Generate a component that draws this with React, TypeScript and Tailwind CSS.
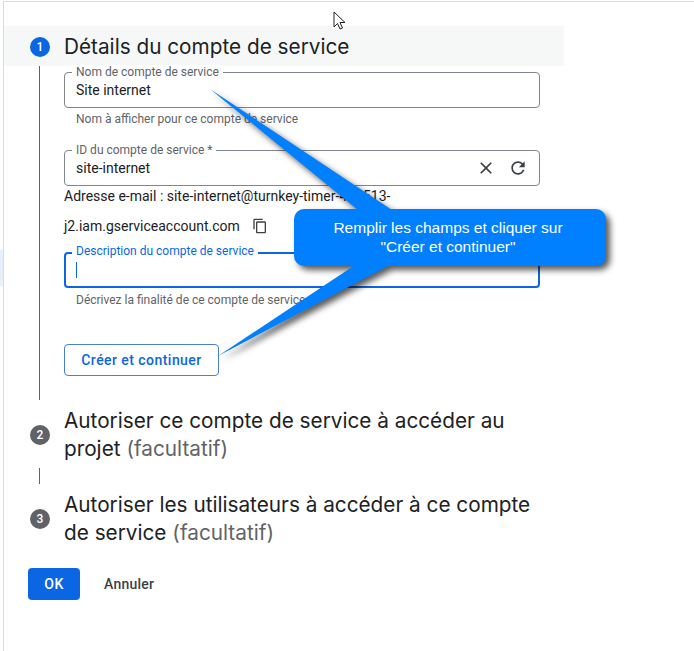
function Field({ label, value, hint, action }: { label: string; value: string; hint?: string; action?: boolean }) {
  return (
    <div>
      <div className="relative flex h-9 items-center justify-between rounded border border-[#80868b] pl-[11px] pr-[11px]">
        <span className="absolute -top-[8px] left-[7px] bg-white px-1 text-[12px] leading-[14px] text-[#5f6368]">{label}</span>
        <span className="text-[14px] text-[#202124]">{value}</span>
        {action && (
          <div className="flex items-center gap-3 text-[#3c4043]">
            <svg width="20" height="20" viewBox="0 0 24 24" fill="currentColor">
              <path d="M19 6.41L17.59 5 12 10.59 6.41 5 5 6.41 10.59 12 5 17.59 6.41 19 12 13.41 17.59 19 19 17.59 13.41 12z" />
            </svg>
            <svg width="20" height="20" viewBox="0 0 24 24" fill="currentColor">
              <path d="M17.65 6.35C16.2 4.9 14.21 4 12 4c-4.42 0-7.99 3.58-7.99 8s3.57 8 7.99 8c3.73 0 6.84-2.55 7.73-6h-2.08c-.82 2.33-3.04 4-5.65 4-3.31 0-6-2.69-6-6s2.69-6 6-6c1.66 0 3.14.69 4.22 1.78L13 11h7V4l-2.35 2.35z" />
            </svg>
          </div>
        )}
      </div>
      {hint && <p className="mt-[4px] pl-3 text-[12px] leading-[14px] text-[#5f6368]">{hint}</p>}
    </div>
  );
}

function StepTitle({ n, first, rest }: { n: number; first: string; rest: string }) {
  return (
    <div className="flex items-center">
      <div className="ml-[30px] flex h-5 w-5 items-center justify-center rounded-full bg-[#5f6368] text-[12px] font-medium text-white">{n}</div>
      <h2 className="ml-[14px] w-[470px] text-[20.75px] leading-[28px] text-[#202124] [font-family:Inter,sans-serif]">
        {first} <span className="text-[#5f6368]">{rest}</span>
      </h2>
    </div>
  );
}

export default function App() {
  return (
    <div className="relative h-[651px] w-[694px] overflow-hidden bg-white [font-family:Roboto,sans-serif]">
      <div className="ml-[3px] mt-px h-[650px] border-t border-l border-[#dadce0] pt-6">
        {/* step 1 */}
        <div>
          <div className="flex h-10 w-[560px] items-center bg-[#f6f8f8] pt-px">
            <div className="ml-[26px] flex h-5 w-5 items-center justify-center rounded-full bg-[#0b66e4] text-[12px] font-medium text-white">1</div>
            <h1 className="ml-[14px] text-[20.75px] text-[#202124] [font-family:Inter,sans-serif]">Détails du compte de service</h1>
          </div>
          <div className="ml-[35px] h-[334px] border-l border-[#5f6368] pl-6">
            <div className="w-[476px] pt-[6px]">
              <Field label="Nom de compte de service" value="Site internet" hint="Nom à afficher pour ce compte de service" />
              <div className="mt-[24px]">
                <Field label="ID du compte de service *" value="site-internet" action />
              </div>
              <p className="text-[14px] leading-5 text-[#202124]">Adresse e-mail : site-internet@turnkey-timer-400513-</p>
              <div className="mt-[10px] flex items-center gap-3 text-[14px] leading-5 text-[#202124]">
                j2.iam.gserviceaccount.com
                <svg width="16" height="16" viewBox="0 0 24 24" fill="currentColor" className="text-[#3c4043]">
                  <path d="M16 1H4c-1.1 0-2 .9-2 2v14h2V3h12V1zm3 4H8c-1.1 0-2 .9-2 2v14c0 1.1.9 2 2 2h11c1.1 0 2-.9 2-2V7c0-1.1-.9-2-2-2zm0 16H8V7h11v14z" />
                </svg>
              </div>
              <div className="relative mt-[16px] flex h-9 items-center rounded border-2 border-[#0b66e4] pl-[10px]">
                <span className="absolute -top-[10px] left-[6px] bg-white px-1 text-[12px] leading-[14px] text-[#0b66e4]">Description du compte de service</span>
                <span className="h-[16px] w-px bg-[#0b66e4]" />
              </div>
              <p className="mt-[5px] pl-3 text-[12px] leading-[14px] text-[#5f6368]">Décrivez la finalité de ce compte de service</p>
              <button className="mt-[37px] h-8 w-[155px] rounded border border-[#4a7fd4] text-[14px] font-medium tracking-[0.45px] text-[#0b66e4]">Créer et continuer</button>
            </div>
          </div>
        </div>
        {/* steps 2 and 3 */}
        <div className="-ml-[4px] mt-[7px]">
          <StepTitle n={2} first="Autoriser ce compte de service à accéder au projet" rest="(facultatif)" />
          <div className="ml-[39px] mt-[5px] h-4 w-px bg-[#5f6368]" />
          <div className="mt-[7px]">
            <StepTitle n={3} first="Autoriser les utilisateurs à accéder à ce compte de service" rest="(facultatif)" />
          </div>
          <div className="ml-7 mt-[21px] flex items-center">
            <button className="h-8 w-[52px] rounded bg-[#0b66e4] text-[14px] font-medium tracking-[0.45px] text-white">OK</button>
            <button className="ml-6 text-[14px] font-medium tracking-[0.25px] text-[#3c4043]">Annuler</button>
          </div>
        </div>
      </div>

      {/* light blue sliver of the nav behind */}
      <div className="absolute left-0 top-[250px] h-[36px] w-[3px] bg-[#e8f0fe]" />

      {/* callout */}
      <svg className="absolute left-0 top-0 drop-shadow-[4px_4px_3px_rgba(0,0,0,0.65)]" width="694" height="651" fill="#0080ff">
        <rect x="294" y="209" width="312" height="57" rx="10" />
        <path d="M210 89 L392 210 L358 210 Z" />
        <path d="M218 356 L355 265 L390 265 Z" />
      </svg>
      <div className="absolute left-[292px] top-[218px] w-[312px] text-center text-[15.5px] leading-[19px] text-white [font-family:'Liberation_Sans',sans-serif]">
        Remplir les champs et cliquer sur
        <br />
        "Créer et continuer"
      </div>

      {/* mouse pointer */}
      <svg className="absolute left-[333px] top-[11px]" width="14" height="20" viewBox="0 0 14 20">
        <path d="M1 1 V16 L4.5 12.5 L7 18 L9.5 17 L7 11.5 H12 Z" fill="#fff" stroke="#222" strokeWidth="1" />
      </svg>
    </div>
  );
}
